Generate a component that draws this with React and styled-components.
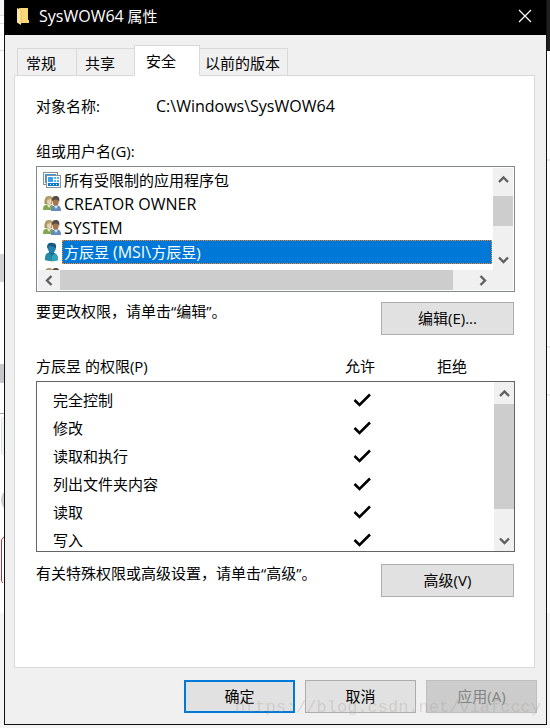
import React, { useState } from "react";
import styled, { createGlobalStyle, css } from "styled-components";

const GlobalStyle = createGlobalStyle`
  * {
    box-sizing: border-box;
  }

  body {
    margin: 0;
    background-color: #fff;
    color: #000;
    font-family: "Open Sans", "Noto Sans CJK SC", sans-serif;
    font-size: 15px;
    line-height: 20px;
  }

  button {
    font: inherit;
    color: inherit;
  }
`;

const Page = styled.div`
  display: grid;
  grid-template-columns: 4px minmax(0, 1fr) 3px;
  min-height: 100vh;
  padding-bottom: 3px;
  background-color: #f4f4f4;
`;

const Gutter = styled.div`
  display: flex;
  flex-direction: column;
  overflow: hidden;
`;

const Strip = styled.div`
  flex: none;
  height: ${({ $height }) => $height}px;
  background-color: ${({ $color }) => $color || "#fff"};
`;

const Outline = styled.div`
  flex: none;
  width: 40px;
  height: ${({ $height }) => $height}px;
  background-color: #fff;
  padding-left: 1px;

  &::before {
    content: "";
    display: block;
    height: 100%;
    border: 1px solid ${({ $line }) => $line};
    border-radius: ${({ $radius }) => $radius}px;
    background-color: ${({ $fill }) => $fill || "#fff"};
  }
`;

const Dialog = styled.main`
  position: relative;
  border: 1px solid #111;
  border-top: none;
  background-color: #f0f0f0;
`;

/* Latin letters look small next to the Chinese ones at the same size */
const Latin = styled.span`
  font-size: 16px;
`;

const TitleBar = styled.header`
  display: flex;
  align-items: center;
  height: 35px;
  padding: 0 14px 3px 12px;
  background-color: #000;
  color: #fff;

  h1 {
    flex: 1;
    margin: 0 0 0 9px;
    font-size: 15px;
    font-weight: 400;
  }
`;

const CloseButton = styled.button`
  display: flex;
  padding: 0;
  border: none;
  background: none;
`;

const Tabs = styled.div`
  display: flex;
  align-items: flex-end;
  height: 41px;
  padding: 0 12px;
`;

const Tab = styled.button`
  height: 28px;
  padding: 1px 8px 0;
  width: ${({ $width }) => $width}px;
  border: 1px solid #d9d9d9;
  border-left-width: ${({ $first }) => ($first ? 1 : 0)}px;
  background-color: #f0f0f0;
  text-align: left;
  white-space: nowrap;

  ${({ $active }) =>
    $active &&
    css`
      position: relative;
      z-index: 1;
      height: 31px;
      padding: 0 11px;
      border-left-width: 1px;
      margin-left: -1px;
      border-bottom-color: #fff;
      background-color: #fff;
    `}

  ${({ $last }) =>
    $last &&
    css`
      padding: 1px 5px 0;
    `}
`;

const Panel = styled.section`
  margin: -1px 11px 0 9px;
  padding: 20px 19px 70px 21px;
  border: 1px solid #d9d9d9;
  background-color: #fff;
`;

const ObjectName = styled.div`
  display: grid;
  grid-template-columns: 120px 1fr;
  margin-bottom: 25px;
`;

const ListLabel = styled.div`
  margin-bottom: 5px;
`;

const UserBox = styled.div`
  display: grid;
  grid-template-columns: minmax(0, 1fr) 20px;
  grid-template-rows: 102px 20px;
  padding: 1px;
  border: 1px solid #828790;
`;

const UserList = styled.ul`
  margin: 0;
  padding: 0;
  overflow: hidden;
  list-style: none;
`;

const UserName = styled.div`
  flex: 1;
  height: 24px;
  padding: 1px;
  border: 1px dotted transparent;
  white-space: nowrap;
`;

const UserItem = styled.li`
  display: flex;
  align-items: center;
  height: 24px;
  padding: 0 1px 0 5px;

  svg {
    flex: none;
    margin-right: 1px;
  }

  &[aria-selected="true"] ${UserName} {
    border-color: #ff8728;
    background-color: #0078d7;
    color: #fff;
  }
`;

const ScrollTrack = styled.div`
  display: flex;
  flex-direction: ${({ $horizontal }) => ($horizontal ? "row" : "column")};
  background-color: #f0f0f0;
`;

const ScrollButton = styled.button`
  display: flex;
  flex: 0 0 22px;
  align-items: center;
  justify-content: center;
  padding: 0;
  border: none;
  background: none;
`;

const ScrollSpace = styled.div`
  flex: ${({ $grow }) => $grow};
`;

const ScrollThumb = styled.div`
  flex: ${({ $grow }) => $grow};
  background-color: #cdcdcd;
`;

const ActionRow = styled.div`
  display: flex;
  align-items: flex-start;
  justify-content: space-between;
  margin-top: ${({ $gap }) => $gap}px;
  padding-right: 1px;

  span {
    line-height: 18px;
  }
`;

const Button = styled.button`
  width: ${({ $wide }) => ($wide ? 133 : 111)}px;
  height: 33px;
  padding: 0 0 2px;
  border: 1px solid #adadad;
  background-color: #e1e1e1;

  ${({ $primary }) =>
    $primary &&
    css`
      border: 2px solid #0078d7;
    `}

  &:disabled {
    border-color: #bfbfbf;
    background-color: #ccc;
    color: #838383;
  }
`;

const PermissionHead = styled.div`
  display: grid;
  grid-template-columns: 1fr 92px 92px;
  margin: 21px 0 5px;
  padding-right: 17px;

  span + span {
    text-align: center;
  }
`;

const PermissionBox = styled.div`
  display: grid;
  grid-template-columns: minmax(0, 1fr) 20px;
  height: 171px;
  border: 1px solid #646464;
  overflow: hidden;
`;

const PermissionView = styled.div`
  height: 169px;
  padding-top: 4px;
  overflow: hidden;
`;

const PermissionTable = styled.table`
  width: 100%;
  border-collapse: collapse;
  table-layout: fixed;

  th,
  td {
    height: 28px;
    padding: 0;
  }

  th {
    padding-left: 16px;
    font-weight: 400;
    text-align: left;
  }

  td {
    width: 92px;
  }

  td:last-child {
    width: 86px;
  }
`;

const TickBox = styled.label`
  display: grid;
  justify-content: center;
  align-items: center;

  input,
  svg {
    grid-area: 1 / 1;
    width: 18px;
    height: 16px;
    margin: 0;
  }

  input {
    appearance: none;
  }
`;

const Footer = styled.footer`
  display: flex;
  justify-content: flex-end;
  gap: 10px;
  padding: 12px 9px 11px;
`;

const Watermark = styled.div`
  position: absolute;
  right: 5px;
  bottom: 6px;
  color: rgba(160, 155, 145, 0.3);
  font-family: "Liberation Mono", monospace;
  font-size: 17px;
  pointer-events: none;
`;

const FolderIcon = () => (
  <svg width="13" height="18" viewBox="0 0 13 18" aria-hidden="true">
    <path d="M2 1h9v12l1 0v3H3z" fill="#f0c55a" />
    <path d="M4 1h7v12h1v3H4z" fill="#f9d877" />
    <path d="M0 1l4 2v15l-4-2.5z" fill="#ffe9a2" />
    <path d="M4 3v14" stroke="#dfad43" strokeWidth="0.6" />
  </svg>
);

const CloseIcon = () => (
  <svg width="14" height="14" viewBox="0 0 14 14" aria-hidden="true">
    <path d="M1 1l12 12M13 1L1 13" stroke="#fff" strokeWidth="1.2" />
  </svg>
);

const arrows = {
  up: "M1 8l4.5-4.5L10 8",
  down: "M1 3.5l4.5 4.5L10 3.5",
  left: "M7.5 1L3 5.5 7.5 10",
  right: "M3.5 1L8 5.5 3.5 10",
};

const Arrow = ({ to }) => (
  <svg width="11" height="11" viewBox="0 0 11 11" aria-hidden="true">
    <path d={arrows[to]} fill="none" stroke="#606060" strokeWidth="2.4" />
  </svg>
);

const PackageIcon = () => (
  <svg width="18" height="18" viewBox="0 0 18 18" aria-hidden="true">
    <rect x="0.5" y="1.5" width="14" height="12" fill="#fff" stroke="#8a8f94" />
    <path d="M2 3h11v2H2zM2 3h2v9H2z" fill="#2f96e4" />
    <rect x="3.5" y="4.5" width="14" height="12" fill="#fff" stroke="#8a8f94" />
    <path d="M5 6h5v5H5z" fill="#3aa0ec" />
    <path d="M11 6h2v2h-2zM14 6h2v2h-2zM11 9h2v2h-2zM14 9h2v2h-2z" fill="#5bb1f0" />
    <path d="M5 12h11v3H5z" fill="#0878d0" />
    <path d="M7 13h1v1H7zM10 13h1v1h-1zM13 13h1v1h-1z" fill="#fff" />
  </svg>
);

const GroupIcon = () => (
  <svg width="18" height="18" viewBox="0 0 18 18" aria-hidden="true">
    <path d="M0 15c0-4 1-5 4-5.5h4c2 .5 3 2 3 5.5z" fill="#83a94e" />
    <path d="M4 10l2 3 2-3z" fill="#f2dfc6" />
    <path d="M1.5 9C1 4 2.500 1 6 1s4 2.500 3 8z" fill="#a5935c" />
    <ellipse cx="6.2" cy="6" rx="2.3" ry="3.5" fill="#ecd0b3" />
    <path d="M3 5c1-3 4-4 6-1-2 0-4 0-6 3z" fill="#b7a46b" />
    <path d="M8 16c0-4 1-5 3.5-5.5H15c2 .5 3 2 3 5.5z" fill="#628cb8" />
    <path d="M11 11l2 3 2-3z" fill="#d6e6f2" />
    <ellipse cx="12.7" cy="6.5" rx="3" ry="4.3" fill="#a2774f" />
    <path d="M9 6c-.5-4 1.5-5 4-5s4 2 3.2 6c-1-3-4-3.500-7.200-1z" fill="#594b42" />
  </svg>
);

const UserIcon = () => (
  <svg width="18" height="20" viewBox="0 0 18 20" aria-hidden="true">
    <path d="M2 18c0-5 .5-6.500 4-7.500h4c4 1 5 3 5 7.500-3 1.500-10 1.500-13 0z" fill="#268ba8" />
    <path d="M9 11c4 1 6 3 6 7-2 1-4 1.200-6 1.200z" fill="#32a3b8" />
    <path d="M6 9h5v3l-2 2-3-3z" fill="#176c91" />
    <ellipse cx="8.8" cy="6" rx="4" ry="5" fill="#2680ad" />
    <path d="M4 5c0-4 3-5 6-4 3 0 4 3 2.500 6-.5-3-4-2-6.500-3.500L5 7z" fill="#185982" />
  </svg>
);

const Tick = () => (
  <svg viewBox="0 0 18 16" aria-hidden="true">
    <path d="M1.5 8l5 5L17 2.5" fill="none" stroke="#000" strokeWidth="2.6" />
  </svg>
);

const tabs = [
  { name: "常规", width: 60 },
  { name: "共享", width: 58 },
  { name: "安全", width: 66 },
  { name: "以前的版本", width: 88 },
];

const users = [
  { name: "所有受限制的应用程序包", Icon: PackageIcon },
  { name: <Latin>CREATOR OWNER</Latin>, Icon: GroupIcon },
  { name: <Latin>SYSTEM</Latin>, Icon: GroupIcon },
  {
    name: (
      <>
        方辰昱 <Latin>(MSI\</Latin>方辰昱)
      </>
    ),
    Icon: UserIcon,
  },
  { name: "", Icon: GroupIcon },
];

const permissions = [
  "完全控制",
  "修改",
  "读取和执行",
  "列出文件夹内容",
  "读取",
  "写入",
];

const App = () => {
  const [activeTab, setActiveTab] = useState("安全");
  const [selected, setSelected] = useState(3);

  return (
    <>
      <GlobalStyle />
      <Page lang="zh-CN">
        <Gutter>
          <Strip $height={15} $color="#f5f6f8" />
          <Strip $height={1} $color="#dcdcdc" />
          <Strip $height={7} />
          <Strip $height={1} $color="#dcdcdc" />
          <Strip $height={26} />
          <Strip $height={1} $color="#dcdcdc" />
          <Strip $height={203} />
          <Strip $height={28} $color="#d4d4d6" />
          <Strip $height={82} />
          <Strip $height={19} $color="#c8c8ca" />
          <Strip $height={30} />
          <Strip $height={1} $color="#a8a8a8" />
          <Strip $height={2} />
          <Outline $height={39} $radius={5} $line="#dedfe2" $fill="#f3f4f5" />
          <Strip $height={34} />
          <Outline $height={20} $radius={10} $line="#d0d0d0" $fill="#d0d0d0" />
          <Strip $height={27} />
          <Outline $height={47} $radius={5} $line="#b8323c" />
          <Strip $height={30} />
        </Gutter>

        <Dialog>
          <TitleBar>
            <FolderIcon />
            <h1>
              <Latin>SysWOW64</Latin> 属性
            </h1>
            <CloseButton aria-label="关闭">
              <CloseIcon />
            </CloseButton>
          </TitleBar>

          <Tabs role="tablist">
            {tabs.map(({ name, width }, index) => (
              <Tab
                key={name}
                role="tab"
                aria-selected={name === activeTab}
                $active={name === activeTab}
                $first={index === 0}
                $last={index === tabs.length - 1}
                $width={width}
                onClick={() => setActiveTab(name)}
              >
                {name}
              </Tab>
            ))}
          </Tabs>

          <Panel role="tabpanel">
            <ObjectName>
              <span>对象名称:</span>
              <Latin>C:\Windows\SysWOW64</Latin>
            </ObjectName>

            <ListLabel id="users-label">组或用户名(G):</ListLabel>
            <UserBox>
              <UserList role="listbox" aria-labelledby="users-label">
                {users.map(({ name, Icon }, index) => (
                  <UserItem
                    key={index}
                    role="option"
                    aria-selected={index === selected}
                    onClick={() => setSelected(index)}
                  >
                    <Icon />
                    <UserName>{name}</UserName>
                  </UserItem>
                ))}
              </UserList>
              <ScrollTrack>
                <ScrollButton aria-label="向上">
                  <Arrow to="up" />
                </ScrollButton>
                <ScrollSpace $grow={6} />
                <ScrollThumb $grow={30} />
                <ScrollSpace $grow={22} />
                <ScrollButton aria-label="向下">
                  <Arrow to="down" />
                </ScrollButton>
              </ScrollTrack>
              <ScrollTrack $horizontal>
                <ScrollButton aria-label="向左">
                  <Arrow to="left" />
                </ScrollButton>
                <ScrollThumb $grow={393} />
                <ScrollSpace $grow={18} />
                <ScrollButton aria-label="向右">
                  <Arrow to="right" />
                </ScrollButton>
              </ScrollTrack>
              <ScrollTrack />
            </UserBox>

            <ActionRow $gap={10}>
              <span>要更改权限，请单击“编辑”。</span>
              <Button $wide>编辑(E)...</Button>
            </ActionRow>

            <PermissionHead>
              <span id="permissions-label">方辰昱 的权限(P)</span>
              <span>允许</span>
              <span>拒绝</span>
            </PermissionHead>
            <PermissionBox>
              <PermissionView>
                <PermissionTable aria-labelledby="permissions-label">
                  <tbody>
                    {permissions.map((name, index) => (
                      <tr key={name}>
                        <th scope="row">{name}</th>
                        <td>
                          <TickBox htmlFor={`allow-${index}`}>
                            <input
                              id={`allow-${index}`}
                              type="checkbox"
                              aria-label={`允许 ${name}`}
                              checked
                              disabled
                              readOnly
                            />
                            <Tick />
                          </TickBox>
                        </td>
                        <td />
                      </tr>
                    ))}
                  </tbody>
                </PermissionTable>
              </PermissionView>
              <ScrollTrack>
                <ScrollButton aria-label="向上">
                  <Arrow to="up" />
                </ScrollButton>
                <ScrollThumb $grow={105} />
                <ScrollSpace $grow={20} />
                <ScrollButton aria-label="向下">
                  <Arrow to="down" />
                </ScrollButton>
              </ScrollTrack>
            </PermissionBox>

            <ActionRow $gap={12}>
              <span>有关特殊权限或高级设置，请单击“高级”。</span>
              <Button $wide>高级(V)</Button>
            </ActionRow>
          </Panel>

          <Footer>
            <Button $primary>确定</Button>
            <Button>取消</Button>
            <Button disabled>应用(A)</Button>
          </Footer>
          <Watermark>https://blog.csdn.net/viafcccy</Watermark>
        </Dialog>

        <Gutter>
          <Strip $height={51} $color="#1e1e1e" />
          <Strip $height={108} />
          <Strip $height={2} $color="#ebebeb" />
          <Strip $height={185} />
          <Strip $height={2} $color="#ebebeb" />
          <Strip $height={46} />
          <Strip $height={2} $color="#ebebeb" />
          <Strip $height={217} />
        </Gutter>
      </Page>
    </>
  );
};

export default App;
